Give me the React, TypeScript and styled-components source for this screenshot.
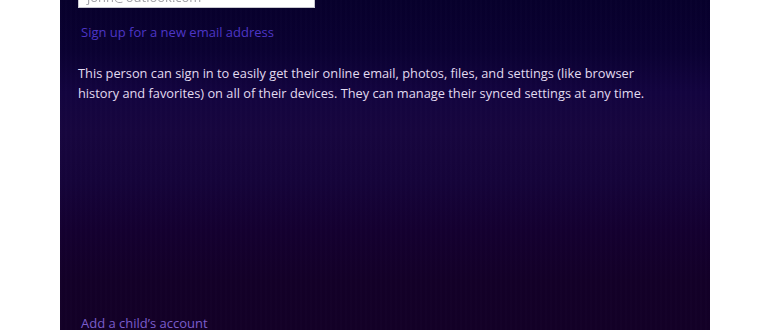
import React from "react";
import styled, { createGlobalStyle } from "styled-components";

const Global = createGlobalStyle`
  html, body { margin: 0; padding: 0; background: #ffffff; }
  body { font-family: "Open Sans", "Noto Sans", sans-serif; }
`;

const Page = styled.div`
  width: 770px;
  height: 330px;
  overflow: hidden;
  display: flex;
  background: #ffffff;
`;

const Gutter = styled.div<{ $w: number }>`
  width: ${(p) => p.$w}px;
  flex: none;
`;

const Panel = styled.div`
  width: 650px;
  height: 330px;
  flex: none;
  overflow: hidden;
  display: flex;
  flex-direction: column;
  padding-left: 18px;
  box-sizing: border-box;
  background:
    repeating-linear-gradient(90deg, rgba(255,255,255,0.008) 0 2px, rgba(0,0,0,0.015) 2px 5px),
    linear-gradient(180deg, #07002c 0%, #0a0132 15%, #130440 28%, #17063f 40%, #15043a 55%, #140030 70%, #130028 85%, #130027 100%);
`;

const InputBox = styled.div`
  margin-top: -23px;
  width: 237px;
  height: 31px;
  box-sizing: border-box;
  background: #ffffff;
  border: 1px solid #c8c8d0;
  display: flex;
  align-items: flex-end;
  padding: 0 8px 3px;
  flex: none;
`;

const InputText = styled.span`
  font-size: 13px;
  color: #a0a0a6;
  line-height: 14px;
  filter: blur(0.4px);
`;

const Link = styled.a<{ $color: string }>`
  display: block;
  margin-left: 3px;
  font-size: 13px;
  line-height: 18px;
  color: ${(p) => p.$color};
  text-decoration: none;
  white-space: nowrap;
`;

const BottomLink = styled(Link)`
  line-height: 15px;
  margin-bottom: -1px;
`;

const Description = styled.p`
  margin: 0;
  width: 590px;
  font-size: 12.8px;
  line-height: 20px;
  color: #e2dbf0;
`;

const Spacer = styled.div`
  flex: 1;
`;

const Gap = styled.div<{ $h: number }>`
  height: ${(p) => p.$h}px;
  flex: none;
`;

export default function App() {
  return (
    <>
      <Global />
      <Page>
        <Gutter $w={60} />
        <Panel>
          <InputBox>
            <InputText>john@outlook.com</InputText>
          </InputBox>
          <Gap $h={15} />
          <Link $color="#4d36c6">Sign up for a new email address</Link>
          <Gap $h={22} />
          <Description>
            This person can sign in to easily get their online email, photos, files, and settings (like browser
            history and favorites) on all of their devices. They can manage their synced settings at any time.
          </Description>
          <Spacer />
          <BottomLink $color="#7a5dcc">Add a child’s account</BottomLink>
        </Panel>
        <Gutter $w={60} />
      </Page>
    </>
  );
}
